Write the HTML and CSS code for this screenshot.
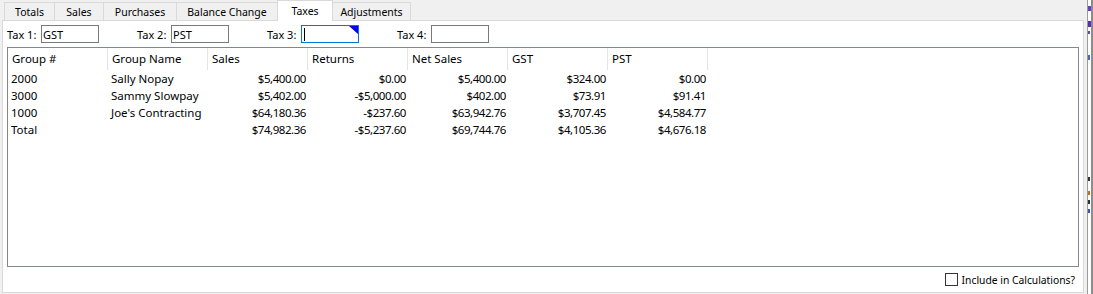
FILE: index.html
```html
<!DOCTYPE html>
<html>
<head>
<meta charset="utf-8">
<link rel="stylesheet" href="styles.css">
</head>
<body>
<div class="app">
  <div class="tabs">
    <div class="tab t-totals">Totals</div>
    <div class="tab t-sales">Sales</div>
    <div class="tab t-purch">Purchases</div>
    <div class="tab t-bal">Balance Change</div>
    <div class="tab t-taxes active">Taxes</div>
    <div class="tab t-adj">Adjustments</div>
  </div>
  <div class="panel">
    <div class="taxrow">
      <div class="taxgroup"><span class="taxlabel">Tax 1:</span><div class="taxbox">GST</div></div>
      <div class="taxgroup"><span class="taxlabel">Tax 2:</span><div class="taxbox">PST</div></div>
      <div class="taxgroup"><span class="taxlabel">Tax 3:</span><div class="taxbox focus"><span class="caret"></span><svg class="corner" width="9" height="8" viewBox="0 0 9 8"><path d="M0 0H9V8Z" fill="#0000f0"/></svg></div></div>
      <div class="taxgroup"><span class="taxlabel">Tax 4:</span><div class="taxbox"></div></div>
    </div>
    <div class="table">
      <div class="thead">
        <div class="th">Group #</div>
        <div class="th">Group Name</div>
        <div class="th">Sales</div>
        <div class="th">Returns</div>
        <div class="th">Net Sales</div>
        <div class="th">GST</div>
        <div class="th">PST</div>
      </div>
      <div class="tr">
        <div class="td">2000</div><div class="td">Sally Nopay</div>
        <div class="td num">$5,400.00</div><div class="td num">$0.00</div><div class="td num">$5,400.00</div><div class="td num">$324.00</div><div class="td num">$0.00</div>
      </div>
      <div class="tr">
        <div class="td">3000</div><div class="td">Sammy Slowpay</div>
        <div class="td num">$5,402.00</div><div class="td num">-$5,000.00</div><div class="td num">$402.00</div><div class="td num">$73.91</div><div class="td num">$91.41</div>
      </div>
      <div class="tr">
        <div class="td">1000</div><div class="td">Joe's Contracting</div>
        <div class="td num">$64,180.36</div><div class="td num">-$237.60</div><div class="td num">$63,942.76</div><div class="td num">$3,707.45</div><div class="td num">$4,584.77</div>
      </div>
      <div class="tr">
        <div class="td">Total</div><div class="td"></div>
        <div class="td num">$74,982.36</div><div class="td num">-$5,237.60</div><div class="td num">$69,744.76</div><div class="td num">$4,105.36</div><div class="td num">$4,676.18</div>
      </div>
    </div>
    <div class="footer">
      <span class="check"></span><span class="checklabel">Include in Calculations?</span>
    </div>
  </div>
</div>
<div class="edge"></div>
</body>
</html>
```

FILE: styles.css
```css
html, body {
  margin: 0;
  height: 294px;
  overflow: hidden;
}
body {
  background: #f0f0f0;
  font-family: "Noto Sans", "DejaVu Sans", sans-serif;
  color: #000;
  display: flex;
}
* { box-sizing: border-box; }

.app {
  width: 1087px;
  display: flex;
  flex-direction: column;
}

.tabs {
  display: flex;
  align-items: flex-end;
  height: 20px;
  padding-left: 4px;
}
.tab {
  height: 18px;
  border: 1px solid #d9d9d9;
  border-bottom: none;
  margin-left: -1px;
  background: #f0f0f0;
  font-size: 10.5px;
  display: flex;
  align-items: center;
  justify-content: center;
  padding-top: 1px;
  white-space: nowrap;
}
.t-totals { width: 51px; margin-left: 0; }
.t-sales { width: 50px; }
.t-purch { width: 74px; }
.t-bal { width: 102px; }
.t-taxes { width: 56px; }
.t-adj { width: 79px; }
.tab.active {
  height: 21px;
  margin-bottom: -1px;
  background: #fff;
  position: relative;
  z-index: 1;
  padding-top: 0;
  padding-bottom: 1px;
}

.panel {
  margin-left: 2px;
  width: 1082px;
  height: 273px;
  border: 1px solid #d9d9d9;
  background: #fff;
  display: flex;
  flex-direction: column;
}

.taxrow {
  display: flex;
  margin: 4px 0 0 4px;
  height: 18px;
}
.taxgroup {
  width: 130px;
  display: flex;
  align-items: center;
}
.taxlabel {
  width: 34px;
  font-size: 11px;
  white-space: nowrap;
}
.taxbox {
  width: 58px;
  height: 18px;
  border: 1px solid #7a7a7a;
  font-size: 11px;
  padding-left: 1px;
  display: flex;
  align-items: center;
  position: relative;
}
.taxbox.focus { border-color: #0078d7; }
.caret {
  width: 1px;
  height: 13px;
  margin-left: 1px;
  background: #000;
}
.corner {
  position: absolute;
  top: 0;
  right: 0;
  display: block;
}

.table {
  margin: 4px 4px 0 4px;
  height: 220px;
  border: 1px solid #828790;
}
.thead {
  display: grid;
  grid-template-columns: repeat(7, 100px);
  height: 22px;
}
.th {
  border-right: 1px solid #e5e5e5;
  padding-left: 4px;
  font-size: 11.5px;
  line-height: 22px;
  white-space: nowrap;
}
.tr {
  display: grid;
  grid-template-columns: repeat(7, 100px);
  height: 17px;
  line-height: 17px;
  font-size: 11.5px;
}
.td {
  padding: 0 3px;
  white-space: nowrap;
}
.num {
  text-align: right;
  padding-right: 2px;
  letter-spacing: -0.45px;
}

.footer {
  flex: 1;
  display: flex;
  justify-content: flex-end;
  align-items: center;
  padding-right: 8px;
  font-size: 10.3px;
}
.check {
  width: 13px;
  height: 13px;
  border: 1px solid #333;
  margin-right: 4px;
}

.edge {
  width: 6px;
  height: 294px;
  border-left: 1px solid #9c9c9c;
  background:
    linear-gradient(#6a3ad0, #6a3ad0) 0 6px / 3px 5px no-repeat,
    linear-gradient(#5a2ac0, #5a2ac0) 0 21px / 3px 6px no-repeat,
    linear-gradient(#5a4ac0, #5a4ac0) 0 31px / 2px 3px no-repeat,
    linear-gradient(#3a6ad0, #3a6ad0) 0 55px / 2px 5px no-repeat,
    linear-gradient(#333, #333) 0 177px / 2px 4px no-repeat,
    linear-gradient(#c07020, #c07020) 0 191px / 2px 4px no-repeat,
    linear-gradient(#333, #333) 0 200px / 2px 4px no-repeat,
    linear-gradient(#2a5ac0, #2a5ac0) 0 209px / 2px 4px no-repeat,
    linear-gradient(to right, #fff 0 3px, #8c8c8c 3px);
}
```
